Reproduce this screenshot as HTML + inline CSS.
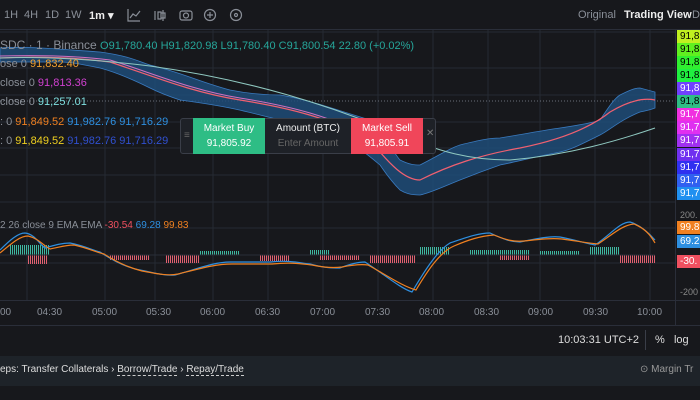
<!DOCTYPE html>
<html><head><meta charset="utf-8"><style>
*{margin:0;padding:0;box-sizing:border-box}
body{width:700px;height:400px;background:#17181c;font-family:"Liberation Sans",sans-serif;overflow:hidden;position:relative;color:#b2b5be}
.a{position:absolute;white-space:nowrap}
.tb{top:0;left:0;width:700px;height:30px;background:#17181c;border-bottom:1px solid #2a2e39}
.tb span{position:absolute;top:9px;font-size:11px;color:#8a8f98}
.lg{font-size:11px}
.pl{position:absolute;left:677px;width:23px;height:13px;font-size:10px;color:#000;padding-left:3px;line-height:13px}
</style></head><body>
<div class="a tb">
<span style="left:4px">1H</span><span style="left:24px">4H</span><span style="left:45px">1D</span><span style="left:65px">1W</span>
<span style="left:89px;color:#eee;font-weight:bold">1m ▾</span>
<svg class="a" style="left:126px;top:7px" width="120" height="16" fill="none" stroke="#8a8f98" stroke-width="1.2">
<path d="M2 2v12h12M4 11l3-4 3 2 4-5"/>
<path d="M29 4v9M32 5h3v7h-3zM37 3v11M35 6h4v5h-4z"/>
<rect x="54" y="4" width="12" height="9" rx="2"/><circle cx="60" cy="8.5" r="2.5"/>
<circle cx="84" cy="8" r="5.5"/><path d="M84 5v6M81 8h6"/>
<circle cx="110" cy="8" r="5.5"/><circle cx="110" cy="8" r="1.5"/>
</svg>
<span style="left:578px">Original</span><span style="left:624px;color:#eee;font-weight:bold">Trading View</span><span style="left:692px">D</span>
</div>
<svg class="a" style="left:0;top:30px" width="675" height="270">
<defs>
<pattern id="g" width="2" height="4" patternUnits="userSpaceOnUse"><rect width="1" height="4" fill="#3fb8a0"/></pattern>
<pattern id="r" width="2" height="4" patternUnits="userSpaceOnUse"><rect width="1" height="4" fill="#e06070"/></pattern>
</defs>
<g stroke="#262a33" stroke-width="1">
<path d="M27 0v270M105 0v270M155 0v270M213 0v270M268 0v270M323 0v270M378 0v270M433 0v270M488 0v270M540 0v270M595 0v270M650 0v270"/>
<path d="M0 2h675M0 38h675M0 65h675M0 92h675M0 118h675M0 145h675M0 172h675M0 198h675M0 233h675"/>
</g>
<path d="M0 71h675" stroke="#6a6e78" stroke-dasharray="1 2"/>
<g transform="translate(0,-30)">
<path d="M0 48 C30 46,70 50,100 52 C130 56,140 62,150 65 C180 72,200 82,230 90 C250 94,270 95,280 95 C310 100,330 108,370 120 C385 135,395 155,400 160 C410 165,415 165,420 165 C440 155,450 148,460 145 C480 140,490 138,500 138 C530 133,545 130,560 128 C580 125,595 122,600 120 C610 105,615 98,620 95 C630 90,635 88,640 88 L655 92 L655 108 C650 110,645 111,640 112 C620 120,610 130,600 135 C580 145,570 150,560 152 C530 158,515 162,500 165 C480 172,470 176,460 180 C440 188,430 193,420 195 C410 195,405 193,400 190 C390 180,385 172,380 165 C360 148,345 138,330 130 C300 123,290 121,280 120 C260 115,245 111,230 108 C210 104,195 102,180 100 C165 95,158 92,150 88 C130 78,115 72,100 68 C80 64,70 62,60 62 L0 62Z" fill="#1f4c78" fill-opacity=".85" stroke="#3a7bc0" stroke-width=".8"/>
<path d="M0 58 C40 56,80 58,110 62 C150 75,190 92,240 100 C290 108,330 118,370 140 C390 165,405 180,420 180 C450 165,480 155,520 148 C560 140,590 128,610 112 C630 100,645 98,655 100" fill="none" stroke="#f06070" stroke-width="1.2"/>
<path d="M0 56 C40 55,80 56,110 60 C150 72,190 90,240 98 C290 106,330 116,370 137" fill="none" stroke="#d070c0" stroke-width="1"/>
<path d="M0 58 C50 56,100 60,150 66 C250 80,330 105,400 135 C440 152,470 160,510 160 C570 155,620 140,655 128" fill="none" stroke="#8fc8c0" stroke-width="1"/>
<g fill="url(#g)"><rect x="10" y="245" width="40" height="10"/><rect x="420" y="247" width="30" height="8"/><rect x="470" y="250" width="60" height="5"/><rect x="540" y="251" width="40" height="4"/><rect x="590" y="247" width="30" height="8"/><rect x="310" y="250" width="20" height="5"/><rect x="200" y="251" width="40" height="4"/></g>
<g fill="url(#r)"><rect x="28" y="255" width="20" height="9"/><rect x="110" y="255" width="40" height="5"/><rect x="165" y="255" width="35" height="8"/><rect x="260" y="255" width="30" height="6"/><rect x="320" y="255" width="40" height="5"/><rect x="370" y="255" width="45" height="8"/><rect x="500" y="255" width="30" height="5"/><rect x="620" y="255" width="35" height="8"/></g>
<path d="M0 255h655" stroke="#2a2e39"/>
<path d="M0 250 C10 240,18 233,25 233 C35 234,40 245,45 248 C55 245,62 243,70 243 C85 246,92 250,100 252 C115 262,128 268,140 270 C155 273,165 276,175 275 C200 268,215 262,230 262 C250 262,260 262,270 262 C290 260,300 263,310 264 C325 268,332 268,340 268 C350 264,358 262,365 262 C385 275,400 288,412 292 C425 270,438 250,450 243 C465 238,478 233,490 233 C505 240,512 242,520 242 C540 238,550 236,560 237 C575 240,585 243,595 245 C610 235,620 222,630 222 C640 225,648 232,655 240" fill="none" stroke="#2e8fe0" stroke-width="1.2"/>
<path d="M0 253 C12 243,20 236,28 236 C38 238,44 246,50 249 C60 247,66 245,74 245 C88 248,95 252,104 254 C118 263,130 268,142 271 C158 274,168 276,178 274 C202 268,216 264,232 264 C252 264,262 264,272 264 C292 262,302 264,312 265 C326 268,334 268,342 267 C352 265,360 264,368 265 C388 276,402 286,416 290 C428 270,440 252,454 246 C468 240,480 236,494 235 C506 240,514 242,524 241 C542 239,552 238,562 239 C577 241,587 243,598 244 C612 235,622 225,634 224 C644 228,650 234,655 243" fill="none" stroke="#f08020" stroke-width="1.2"/>
</g>
</svg>
<div class="a lg" style="left:0;top:38px;color:#8a8f98;font-size:12px">SDC · 1 · Binance <span style="color:#26a69a;font-size:11px">O91,780.40 H91,820.98 L91,780.40 C91,800.54 22.80 (+0.02%)</span></div>
<div class="a lg" style="left:0;top:58px;color:#8a8f98">ose 0 <span style="color:#f0a030">91,832.40</span></div>
<div class="a lg" style="left:0;top:77px;color:#8a8f98">close 0 <span style="color:#d040d0">91,813.36</span></div>
<div class="a lg" style="left:0;top:96px;color:#8a8f98">close 0 <span style="color:#7fe0e0">91,257.01</span></div>
<div class="a lg" style="left:0;top:116px;color:#8a8f98">: 0 <span style="color:#f08020">91,849.52</span> <span style="color:#2e8fe0">91,982.76 91,716.29</span></div>
<div class="a lg" style="left:0;top:135px;color:#8a8f98">: 0 <span style="color:#f0d020">91,849.52</span> <span style="color:#3050d0">91,982.76 91,716.29</span></div>
<div class="a lg" style="left:0;top:220px;color:#8a8f98;font-size:10px">2 26 close 9 EMA EMA <span style="color:#f05060">-30.54</span> <span style="color:#2e8fe0">69.28</span> <span style="color:#f08020">99.83</span></div>
<div class="a" style="left:180px;top:118px;width:256px;height:36px;background:#1e2127;border:1px solid #3a3e48;border-radius:3px"></div>
<div class="a" style="left:184px;top:130px;color:#666;font-size:10px">≡</div>
<div class="a" style="left:193px;top:118px;width:72px;height:36px;background:#2ebd85;color:#fff;font-size:10px;text-align:center;line-height:15px;padding-top:3px">Market Buy<br>91,805.92</div>
<div class="a" style="left:267px;top:121px;width:82px;text-align:center;font-size:10px;line-height:15px;color:#eee">Amount (BTC)<br><span style="color:#666">Enter Amount</span></div>
<div class="a" style="left:351px;top:118px;width:72px;height:36px;background:#f0465a;color:#fff;font-size:10px;text-align:center;line-height:15px;padding-top:3px">Market Sell<br>91,805.91</div>
<div class="a" style="left:426px;top:128px;color:#777;font-size:10px">✕</div>
<div class="a" style="left:675px;top:30px;width:25px;height:295px;background:#17181c;border-left:1px solid #2a2e39"></div>
<div class="pl" style="top:30px;background:#c0f020">91,8</div>
<div class="pl" style="top:43px;background:#60f020">91,8</div>
<div class="pl" style="top:56px;background:#30f030">91,8</div>
<div class="pl" style="top:69px;background:#20f040">91,8</div>
<div class="pl" style="top:82px;background:#7040ff;color:#fff">91,8</div>
<div class="pl" style="top:95px;background:#2ebd85">91,8</div>
<div class="pl" style="top:108px;background:#f030e0;color:#fff">91,7</div>
<div class="pl" style="top:121px;background:#e030f0;color:#fff">91,7</div>
<div class="pl" style="top:134px;background:#a030f0;color:#fff">91,7</div>
<div class="pl" style="top:148px;background:#7030f0;color:#fff">91,7</div>
<div class="pl" style="top:161px;background:#3030f0;color:#fff">91,7</div>
<div class="pl" style="top:174px;background:#3060f0;color:#fff">91,7</div>
<div class="pl" style="top:187px;background:#2090f0;color:#fff">91,7</div>
<div class="a" style="left:680px;top:210px;font-size:9px;color:#888">200.</div>
<div class="pl" style="top:221px;background:#f08020;color:#fff">99.8</div>
<div class="pl" style="top:235px;background:#2e8fe0;color:#fff">69.2</div>
<div class="pl" style="top:255px;background:#f05060;color:#fff">-30.</div>
<div class="a" style="left:680px;top:287px;font-size:9px;color:#888">-200</div>
<div class="a" style="left:0;top:300px;width:700px;height:25px;border-top:1px solid #2a2e39;font-size:10px;color:#8a8f98">
<span class="a" style="left:0;top:6px">00</span><span class="a" style="left:37px;top:6px">04:30</span><span class="a" style="left:92px;top:6px">05:00</span><span class="a" style="left:146px;top:6px">05:30</span><span class="a" style="left:200px;top:6px">06:00</span><span class="a" style="left:255px;top:6px">06:30</span><span class="a" style="left:310px;top:6px">07:00</span><span class="a" style="left:365px;top:6px">07:30</span><span class="a" style="left:419px;top:6px">08:00</span><span class="a" style="left:474px;top:6px">08:30</span><span class="a" style="left:528px;top:6px">09:00</span><span class="a" style="left:583px;top:6px">09:30</span><span class="a" style="left:637px;top:6px">10:00</span></div>
<div class="a" style="left:0;top:325px;width:700px;height:30px;border-top:1px solid #2a2e39"></div>
<div class="a" style="left:558px;top:334px;font-size:11px;color:#ddd">10:03:31 UTC+2</div>
<div class="a" style="left:645px;top:330px;width:1px;height:20px;background:#3a3e48"></div>
<div class="a" style="left:655px;top:334px;font-size:11px;color:#ddd">%&nbsp;&nbsp; log</div>
<div class="a" style="left:0;top:356px;width:700px;height:30px;background:#1e2329"></div>
<div class="a" style="left:0;top:364px;font-size:10px;color:#ddd">eps: Transfer Collaterals › <span style="border-bottom:1px dashed #ccc">Borrow/Trade</span> › <span style="border-bottom:1px dashed #ccc">Repay/Trade</span></div>
<div class="a" style="left:640px;top:364px;font-size:10px;color:#999">⊙ Margin Tr</div>
</body></html>
